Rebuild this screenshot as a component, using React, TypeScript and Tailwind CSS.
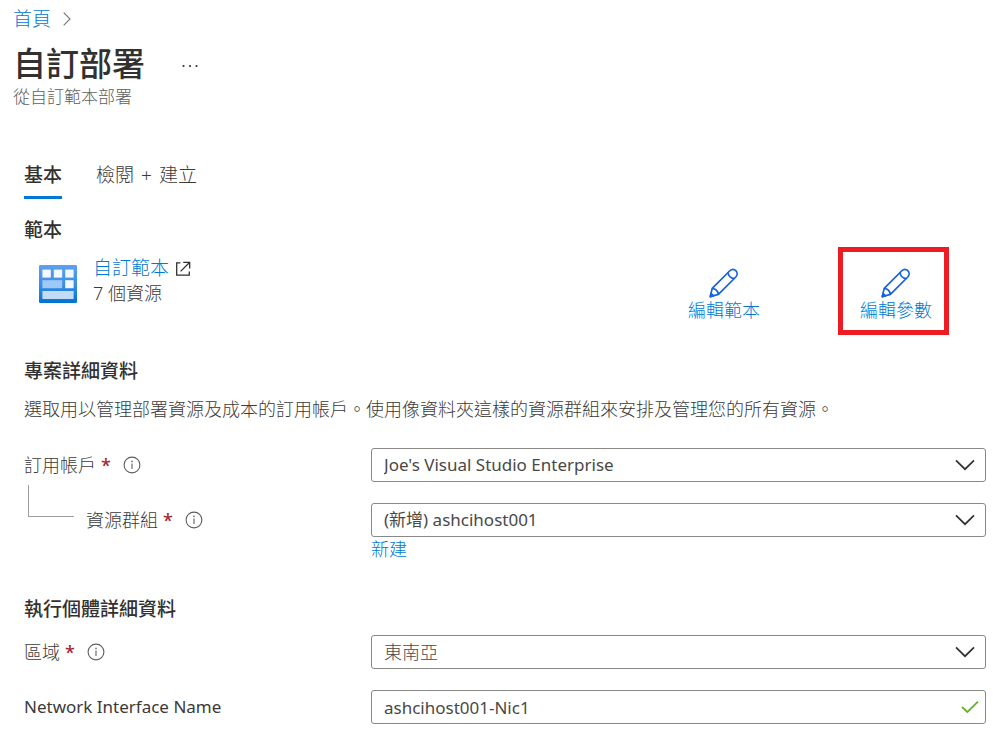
import type { ReactNode } from "react";

function InfoIcon() {
  return (
    <svg viewBox="0 0 18 18" className="size-[18px] shrink-0" fill="none" aria-hidden="true">
      <circle cx="9" cy="9" r="7.9" stroke="#605e5c" strokeWidth="1.1" />
      <path d="M9 7.6V13" stroke="#605e5c" strokeWidth="1.1" />
      <circle cx="9" cy="5.4" r="0.8" fill="#605e5c" />
    </svg>
  );
}

function PencilIcon() {
  return (
    <svg viewBox="0 0 30 30" className="size-[30px]" fill="none" stroke="#1562dc" strokeWidth="1.7" strokeLinejoin="round" aria-hidden="true">
      <path d="M1.3 28.6 3.2 20.4 20.6 3C22.4 1.2 25 1 26.8 2.7 28.6 4.5 28.5 7.2 26.8 9L9.4 26.4Z" />
      <path d="M19 4.6C19.5 8 21.6 10.2 25.2 10.6M3.2 20.4C6.4 20.8 8.8 23 9.4 26.4" />
      <path d="M1.3 28.6 2 25.4 4.5 27.8Z" fill="#1562dc" />
    </svg>
  );
}

function TemplateIcon() {
  return (
    <svg viewBox="0 0 38 38" className="size-[38px] shrink-0" aria-hidden="true">
      <defs>
        <linearGradient id="tile" x1="0" y1="0" x2="0" y2="1">
          <stop offset="0" stopColor="#5ea0ef" />
          <stop offset="0.5" stopColor="#3b8fe6" />
          <stop offset="1" stopColor="#0073d3" />
        </linearGradient>
      </defs>
      <rect width="38" height="38" rx="1.2" fill="url(#tile)" />
      <rect x="3.4" y="4.6" width="8.4" height="8" fill="#f3f8fe" />
      <rect x="14.8" y="4.6" width="8.4" height="8" fill="#f3f8fe" />
      <rect x="26.2" y="4.6" width="8.4" height="8" fill="#f3f8fe" />
      <rect x="3.4" y="15.2" width="19.8" height="8" fill="#9fc8f5" />
      <rect x="26.2" y="15.2" width="8.4" height="8" fill="#f3f8fe" />
      <rect x="3.4" y="26" width="31.2" height="8" fill="#c3dcf6" />
    </svg>
  );
}

function ExternalIcon() {
  return (
    <svg viewBox="0 0 16 16" className="size-4" fill="none" stroke="#323130" strokeWidth="1.3" aria-hidden="true">
      <path d="M5.4 1.8H1.7V14.2H14.3V10.4M8.2 1.3H14.7V7.4M14.5 1.5 5.6 10.4" />
    </svg>
  );
}

function FieldLabel({ htmlFor, children, required }: { htmlFor: string; children: ReactNode; required?: boolean }) {
  return (
    <div className="flex h-[34px] items-center">
      <label htmlFor={htmlFor} className="flex gap-[5px] whitespace-nowrap">
        {children}
        {required && <span className="font-medium text-[#a4262c]">*</span>}
      </label>
      {required && (
        <button type="button" aria-label="資訊" className="ml-3">
          <InfoIcon />
        </button>
      )}
    </div>
  );
}

function Dropdown({ id, value, latin }: { id: string; value: string; latin?: boolean }) {
  return (
    <div className="grid items-center">
      <select
        id={id}
        className={`col-start-1 row-start-1 h-[34px] w-full appearance-none rounded-[3px] border border-[#8a8886] bg-white pr-10 pl-3 text-[#494847] ${latin ? "text-[17px] font-normal" : ""}`}
      >
        <option>{value}</option>
      </select>
      <svg viewBox="0 0 20 12" className="pointer-events-none col-start-1 row-start-1 mr-[11px] h-3 w-5 justify-self-end" fill="none" stroke="#323130" strokeWidth="1.7" aria-hidden="true">
        <path d="M1 1.4 10 10.2 19 1.4" />
      </svg>
    </div>
  );
}

function EditAction({ label, highlighted }: { label: string; highlighted?: boolean }) {
  return (
    <div className={highlighted ? "border-[5px] border-[#ed1c24]" : "border-[5px] border-transparent"}>
      <button type="button" className="flex h-[78px] w-[101px] flex-col items-center pt-4 pl-[5px] leading-6 text-[#0078d4]">
        <PencilIcon />
        {label}
      </button>
    </div>
  );
}

export default function App() {
  return (
    <div className="min-h-screen bg-white pr-3.5 pb-3 font-['Noto_Sans','Noto_Sans_CJK_TC',sans-serif] text-[18px] leading-6 font-light text-[#3b3a39]">
      <header className="pt-[7px] pl-[13px]">
        <nav className="flex items-center gap-3" aria-label="導覽路徑">
          <a href="#" className="text-[19px] text-[#0078d4]">首頁</a>
          <svg viewBox="0 0 8 14" className="h-3.5 w-2" fill="none" stroke="#797775" strokeWidth="1.1" aria-hidden="true">
            <path d="M0.7 0.7 7 7 0.7 13.3" />
          </svg>
        </nav>
        <div className="mt-[13px] flex items-center gap-9">
          <h1 className="text-[33px] leading-10 font-medium text-[#323130]">自訂部署</h1>
          <button type="button" aria-label="更多" className="pt-1">
            <svg viewBox="0 0 18 4" className="h-1 w-[18px]" fill="#323130" aria-hidden="true">
              <circle cx="2.5" cy="2" r="1.1" />
              <circle cx="9" cy="2" r="1.1" />
              <circle cx="15.5" cy="2" r="1.1" />
            </svg>
          </button>
        </div>
        <p className="mt-px text-[17px] text-[#605e5c]">從自訂範本部署</p>
      </header>

      <main className="pl-6">
        <div role="tablist" className="mt-[50px] flex gap-[34px] text-[19px]">
          <button type="button" role="tab" aria-selected="true" className="h-10 border-b-[3px] border-[#0078d4] pb-1.5 font-medium text-[#323130]">
            基本
          </button>
          <button type="button" role="tab" aria-selected="false" className="flex h-10 items-center gap-[7px] pb-2">
            <span>檢閱</span>
            <span>+</span>
            <span>建立</span>
          </button>
        </div>

        <h2 className="mt-[19px] text-[19px] font-medium text-[#323130]">範本</h2>
        <section className="mt-[5px] flex justify-between pr-[37px]">
          <div className="flex gap-4 pt-[9px] pl-[15px]">
            <div className="pt-[9px]">
              <TemplateIcon />
            </div>
            <div className="leading-[25px]">
              <a href="#" className="flex items-center gap-1.5 text-[19px] text-[#0078d4]">
                自訂範本
                <ExternalIcon />
              </a>
              <p>7 個資源</p>
            </div>
          </div>
          <div className="flex gap-[61px]">
            <EditAction label="編輯範本" />
            <EditAction label="編輯參數" highlighted />
          </div>
        </section>

        <h2 className="mt-6 text-[19px] font-medium text-[#323130]">專案詳細資料</h2>
        <p className="mt-3.5">選取用以管理部署資源及成本的訂用帳戶。使用像資料夾這樣的資源群組來安排及管理您的所有資源。</p>

        <div className="mt-[27px] grid grid-cols-[347px_1fr]">
          <FieldLabel htmlFor="subscription" required>訂用帳戶</FieldLabel>
          <Dropdown id="subscription" value="Joe's Visual Studio Enterprise" latin />
          <div className="flex gap-3">
            <div className="mt-[3px] ml-1 h-8 w-[46px] border-b border-l border-[#a19f9d]" />
            <div className="pt-[21px]">
              <FieldLabel htmlFor="group" required>資源群組</FieldLabel>
            </div>
          </div>
          <div className="pt-[21px]">
            <Dropdown id="group" value="(新增) ashcihost001" latin />
            <a href="#" className="text-[#0078d4]">新建</a>
          </div>
        </div>

        <h2 className="mt-9 text-[19px] font-medium text-[#323130]">執行個體詳細資料</h2>
        <div className="mt-3.5 grid grid-cols-[347px_1fr] gap-y-[21px]">
          <FieldLabel htmlFor="region" required>區域</FieldLabel>
          <Dropdown id="region" value="東南亞" />
          <FieldLabel htmlFor="nic">
            <span className="text-[17px] font-normal">Network Interface Name</span>
          </FieldLabel>
          <div className="grid items-center">
            <input
              id="nic"
              type="text"
              defaultValue="ashcihost001-Nic1"
              className="col-start-1 row-start-1 h-[34px] w-full rounded-[3px] border border-[#8a8886] bg-white pr-9 pl-3 text-[17px] font-normal text-[#494847]"
            />
            <svg viewBox="0 0 18 14" className="pointer-events-none col-start-1 row-start-1 mr-[7px] h-3.5 w-[18px] justify-self-end" fill="none" stroke="#6bb02e" strokeWidth="1.8" aria-hidden="true">
              <path d="M1 7 6.4 12 17 1.6" />
            </svg>
          </div>
        </div>
      </main>
    </div>
  );
}
